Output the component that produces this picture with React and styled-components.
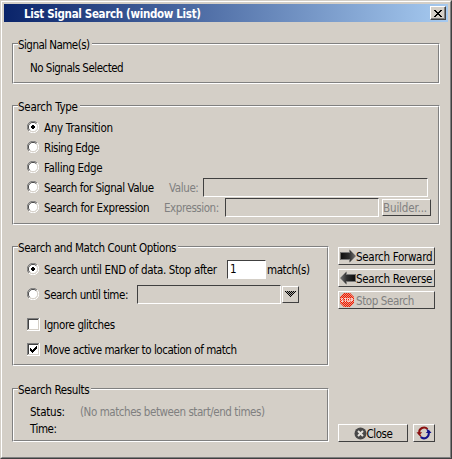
import React from "react";
import styled, { createGlobalStyle, css } from "styled-components";

const FACE = "#d4cfc7";

const Global = createGlobalStyle`
  * { box-sizing: border-box; }
  body { margin: 0; background: ${FACE}; }
  input, button { margin: 0; padding: 0; font: inherit; color: inherit; }
  svg { flex: none; }
`;

const Window = styled.div`
  width: 452px;
  height: 459px;
  border: 1px solid;
  border-color: ${FACE} #404040 #404040 ${FACE};
  background: ${FACE};
  color: #000;
  font: 11.5px/16px "DejaVu Sans Condensed", "DejaVu Sans", sans-serif;
  font-stretch: condensed;
  overflow: hidden;
`;

const Frame = styled.div`
  height: 100%;
  padding: 2px;
  border: 1px solid;
  border-color: #fff #808080 #808080 #fff;
`;

const TitleBar = styled.header`
  display: flex;
  align-items: center;
  justify-content: space-between;
  height: 18px;
  padding: 0 2px 0 20px;
  background: linear-gradient(90deg, #0a246a, #a6caf0);
  color: #fff;
  font-weight: bold;
`;

const Text = styled.span`
  display: block;
  padding-top: 1px;
  margin-bottom: -1px;
  white-space: pre;
  letter-spacing: ${(p) => (p.$ls || 0) - 0.24}px;
  color: ${(p) => (p.$dim ? "#808080" : "inherit")};
`;

const raised = css`
  border: 1px solid;
  border-color: #fff #404040 #404040 #fff;
  background: ${FACE};
`;

const Button = styled.button`
  ${raised}
  display: flex;
  flex: none;
  align-items: center;
  justify-content: ${(p) => (p.$start ? "flex-start" : "center")};
  width: ${(p) => p.$w}px;
  height: ${(p) => p.$h || 18}px;
  padding-left: ${(p) => p.$pad || 0}px;
  margin-left: ${(p) => p.$gap || 0}px;
  line-height: 16px;
`;

const CloseBox = styled.button`
  ${raised}
  display: flex;
  align-items: center;
  justify-content: center;
  width: 16px;
  height: 14px;
  box-shadow: inset -1px -1px #808080;
`;

const Body = styled.main`
  padding: 21px 8px 0;
`;

const Group = styled.section`
  flex: none;
  width: ${(p) => p.$w || 428}px;
  height: ${(p) => p.$h}px;
  margin-bottom: ${(p) => p.$below || 0}px;
  border: 1px solid;
  border-color: #808080 #fff #fff #808080;
`;

const GroupInner = styled.div`
  height: 100%;
  border: 1px solid;
  border-color: #fff #808080 #808080 #fff;
  padding-left: 13px;
`;

const Legend = styled.div`
  display: flex;
  width: fit-content;
  height: 16px;
  margin: -9px 0 0 -9px;
  padding-right: 2px;
  background: ${FACE};
`;

const Row = styled.div`
  display: flex;
  align-items: center;
  height: ${(p) => p.$h || 20}px;
  margin-top: ${(p) => p.$top || 0}px;
  padding-left: ${(p) => p.$indent || 0}px;
`;

const Field = styled.input`
  flex: none;
  width: ${(p) => p.$w}px;
  height: 19px;
  padding-left: 2px;
  border: 1px solid;
  border-color: #404040 #fff #fff #404040;
  border-radius: 0;
  background: ${(p) => (p.$lit ? "#fff" : FACE)};
  outline: none;
`;

const Slot = styled.span`
  display: flex;
  flex: none;
  width: ${(p) => p.$w}px;
  padding-left: ${(p) => p.$pad || 0}px;
`;

const Columns = styled.div`
  display: flex;
  gap: 9px;
`;

const Actions = styled.div`
  display: flex;
  flex-direction: column;
  gap: 4px;
  width: 97px;
  padding-top: 1px;
`;

const Footer = styled.div`
  display: flex;
  justify-content: space-between;
  align-items: flex-end;
  width: 97px;
`;

const Radio = ({ on }) => (
  <svg width="12" height="12" viewBox="0 0 12 12" role="radio" aria-checked={!!on}>
    <circle cx="6" cy="6" r="5" fill="#fff" />
    <path d="M1.9 10.1A5.6 5.6 0 0 1 10.1 1.9" fill="none" stroke="#808080" />
    <path d="M2.7 9.3A4.6 4.6 0 0 1 9.3 2.7" fill="none" stroke="#404040" />
    <path d="M10.1 1.9A5.6 5.6 0 0 1 1.9 10.1" fill="none" stroke="#fff" />
    <path d="M9.3 2.7A4.6 4.6 0 0 1 2.7 9.3" fill="none" stroke={FACE} />
    {on && <path d="M5 4h2v1h1v2h-1v1h-2v-1h-1v-2h1z" fill="#000" />}
  </svg>
);

const CheckBox = ({ on }) => (
  <svg width="13" height="13" viewBox="0 0 13 13" shapeRendering="crispEdges" role="checkbox" aria-checked={!!on}>
    <path d="M0 0h13v13H0z" fill="#fff" />
    <path d="M0 0h12v1H1v11H0z" fill="#808080" />
    <path d="M1 1h10v1H2v9H1z" fill="#404040" />
    <path d="M11 1h1v11H1v-1h10z" fill={FACE} />
    {on && <path d="M3 5h1v1h1v1h1v-1h1v-1h1v-1h1v-1h1v3h-1v1h-1v1h-1v1h-1v1h-1v-1h-1v-1h-1z" fill="#000" />}
  </svg>
);

const ArrowIcon = ({ back }) => (
  <svg width="16" height="14" viewBox="0 0 16 14">
    <defs>
      <linearGradient id={back ? "ab" : "af"} x1="0" x2="1" y1="0" y2="0">
        <stop offset="0" stopColor="#0c0c0c" />
        <stop offset=".55" stopColor="#2c2c2c" />
        <stop offset="1" stopColor="#777" />
      </linearGradient>
    </defs>
    <g transform={back ? "matrix(-1 0 0 1 16 0)" : undefined}>
      <path d="M.5 3H9.500V.5L16 7 9.500 13.500V11H.5z" fill={back ? "url(#ab)" : "url(#af)"} />
      <path d="M.5 3.500H10M.5 10.500H10" stroke="#777" strokeWidth="1" />
    </g>
  </svg>
);

const StopIcon = () => (
  <svg width="14" height="14" viewBox="0 0 14 14">
    <defs>
      <pattern id="dither" width="2" height="2" patternUnits="userSpaceOnUse">
        <path d="M0 0h1v1H0zM1 1h1v1H1z" fill="#f01800" />
      </pattern>
    </defs>
    <path d="M4 0h6l4 4v6l-4 4H4l-4-4V4z" fill="#e8907c" />
    <path d="M4 0h6l4 4v6l-4 4H4l-4-4V4z" fill="url(#dither)" />
    <path d="M3 5.500H1.500v1.500h1.500v1.500h-2M4 5.500h2.500M5.500 5.500v3.500M7.500 5.500h2v3h-2zM11 9V5.500h1.500v2H11" fill="none" stroke="#fff" opacity=".7" />
  </svg>
);

const CloseIcon = () => (
  <svg width="13" height="13" viewBox="0 0 13 13">
    <circle cx="6.500" cy="6.500" r="6" fill="#484848" />
    <path d="M4 4l5 5M9 4L4 9" stroke="#e4e2dc" strokeWidth="2" />
  </svg>
);

const RefreshIcon = () => (
  <svg width="16" height="14" viewBox="0 0 16 14">
    <path d="M3.300 7A4.700 4.700 0 0 1 11.500 3.200" fill="none" stroke="#8b1010" strokeWidth="2" />
    <path d="M3.300 6.500A4.700 4.700 0 0 0 5 10.500" fill="none" stroke="#8b1010" strokeWidth="1.400" />
    <path d="M.5 6.200h5.700L3.200 9.500z" fill="#8b1010" />
    <path d="M12.700 7A4.700 4.700 0 0 1 4.800 11" fill="none" stroke="#10108b" strokeWidth="2" />
    <path d="M12.700 7.500A4.700 4.700 0 0 0 11 3.500" fill="none" stroke="#10108b" strokeWidth="1.400" />
    <path d="M9.800 7H15.500L12.800 3.700z" fill="#10108b" />
  </svg>
);

const DropIcon = () => (
  <svg width="11" height="7" viewBox="0 0 11 7" shapeRendering="crispEdges">
    <defs>
      <pattern id="check" width="2" height="2" patternUnits="userSpaceOnUse">
        <path d="M0 0h1v1H0zM1 1h1v1H1z" fill="#000" />
      </pattern>
    </defs>
    <path d="M0 0h11v1h-1v1h-1v1h-1v1h-1v1h-1v1h-1v-1h-1v-1h-1v-1h-1v-1h-1v-1h-1z" fill="#000" opacity=".2" />
    <path d="M0 0h11v1h-1v1h-1v1h-1v1h-1v1h-1v1h-1v-1h-1v-1h-1v-1h-1v-1h-1v-1h-1z" fill="url(#check)" />
  </svg>
);

export default function App() {
  return (
    <>
      <Global />
      <Window>
        <Frame>
          <TitleBar>
            <Text $ls={-0.09}>List Signal Search (window List)</Text>
            <CloseBox aria-label="Close window">
              <svg width="8" height="7" viewBox="0 0 8 7" shapeRendering="crispEdges">
                <path d="M0 0h2v1h1v1h2v-1h1v-1h2v1h-1v1h-1v1h-1v1h1v1h1v1h1v1h-2v-1h-1v-1h-2v1h-1v1h-2v-1h1v-1h1v-1h1v-1h-1v-1h-1v-1h-1z" />
              </svg>
            </CloseBox>
          </TitleBar>
          <Body>
            <Group $h={41} $below={21}>
              <GroupInner>
                <Legend><Text $ls={-0.3}>Signal Name(s)</Text></Legend>
                <Row $h={16} $top={7} $indent={3}><Text $ls={-0.26}>No Signals Selected</Text></Row>
              </GroupInner>
            </Group>
            <Group $h={120} $below={21}>
              <GroupInner>
                <Legend><Text>Search Type</Text></Legend>
                <Row $top={3}><Radio on /><Slot $w={130} $pad={5}><Text $ls={-0.06}>Any Transition</Text></Slot></Row>
                <Row><Radio /><Slot $w={130} $pad={5}><Text $ls={-0.25}>Rising Edge</Text></Slot></Row>
                <Row><Radio /><Slot $w={130} $pad={5}><Text $ls={-0.1}>Falling Edge</Text></Slot></Row>
                <Row>
                  <Radio /><Slot $w={130} $pad={5}><Text $ls={-0.2}>Search for Signal Value</Text></Slot>
                  <Slot $w={34}><Text $dim $ls={-0.15}>Value:</Text></Slot>
                  <Field $w={225} disabled aria-label="Value" />
                </Row>
                <Row>
                  <Radio /><Slot $w={125} $pad={5}><Text $ls={-0.1}>Search for Expression</Text></Slot>
                  <Slot $w={61}><Text $dim $ls={-0.2}>Expression:</Text></Slot>
                  <Field $w={154} disabled aria-label="Expression" />
                  <Button $w={49} $h={17} $gap={3} $start disabled><Text $dim $ls={0.1}>Builder...</Text></Button>
                </Row>
              </GroupInner>
            </Group>
            <Columns>
              <Group $w={317} $h={120} $below={22}>
                <GroupInner>
                  <Legend><Text $ls={-0.17}>Search and Match Count Options</Text></Legend>
                  <Row $top={4}>
                    <Radio on /><Slot $w={188} $pad={5}><Text $ls={-0.1}>Search until END of data. Stop after</Text></Slot>
                    <Field $w={39} $lit defaultValue="1" aria-label="Match count" />
                    <Slot $w={50} $pad={1}><Text $ls={-0.2}>match(s)</Text></Slot>
                  </Row>
                  <Row $top={5}>
                    <Radio /><Slot $w={98} $pad={5}><Text $ls={-0.2}>Search until time:</Text></Slot>
                    <Field $w={144} disabled aria-label="Search until time" />
                    <Button $w={17} $h={17} $gap={1} aria-label="Time units"><DropIcon /></Button>
                  </Row>
                  <Row $top={10}><CheckBox /><Slot $w={200} $pad={4}><Text $ls={-0.15}>Ignore glitches</Text></Slot></Row>
                  <Row $top={5}><CheckBox on /><Slot $w={220} $pad={4}><Text $ls={-0.2}>Move active marker to location of match</Text></Slot></Row>
                </GroupInner>
              </Group>
              <Actions>
                <Button $w={97} $start $pad={1}><ArrowIcon /><Text $ls={-0.06}>Search Forward</Text></Button>
                <Button $w={97} $start $pad={1}><ArrowIcon back /><Text $ls={-0.06}>Search Reverse</Text></Button>
                <Button $w={97} $start $pad={1} disabled><StopIcon /><Slot $w={70} $pad={2}><Text $dim $ls={-0.15}>Stop Search</Text></Slot></Button>
              </Actions>
            </Columns>
            <Columns>
              <Group $w={317} $h={54}>
                <GroupInner>
                  <Legend><Text $ls={-0.1}>Search Results</Text></Legend>
                  <Row $h={17} $top={5} $indent={3}>
                    <Slot $w={50}><Text>Status:</Text></Slot>
                    <Text $dim $ls={-0.2}>(No matches between start/end times)</Text>
                  </Row>
                  <Row $h={17} $indent={3}><Text $ls={-0.2}>Time:</Text></Row>
                </GroupInner>
              </Group>
              <Footer>
                <Button $w={70}><CloseIcon /><Text $ls={-0.2}>Close</Text></Button>
                <Button $w={22} aria-label="Refresh"><RefreshIcon /></Button>
              </Footer>
            </Columns>
          </Body>
        </Frame>
      </Window>
    </>
  );
}
